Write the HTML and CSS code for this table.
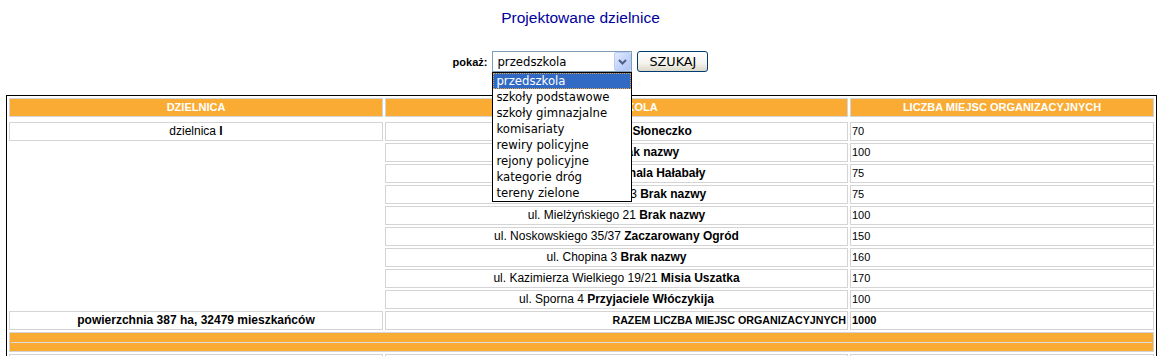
FILE: index.html
```html
<!DOCTYPE html>
<html lang="pl">
<head>
<meta charset="utf-8">
<title>Projektowane dzielnice</title>
<link rel="stylesheet" href="styles.css">
</head>
<body>
<h1 class="title">Projektowane dzielnice</h1>
<form class="filter">
  <label class="filter-label">pokaż:</label>
  <div class="select">
    <span class="select-value">przedszkola</span>
    <span class="select-arrow"><svg width="9" height="6" viewBox="0 0 9 6"><path d="M1 1 L4.5 4.5 L8 1" fill="none" stroke="#4d6185" stroke-width="2"/></svg></span>
    <ul class="select-list">
      <li class="is-active">przedszkola</li>
      <li>szkoły podstawowe</li>
      <li>szkoły gimnazjalne</li>
      <li>komisariaty</li>
      <li>rewiry policyjne</li>
      <li>rejony policyjne</li>
      <li>kategorie dróg</li>
      <li>tereny zielone</li>
    </ul>
  </div>
  <button class="btn" type="button">SZUKAJ</button>
</form>
<table class="grid">
  <thead>
    <tr>
      <th class="c1">DZIELNICA</th>
      <th class="c2">PRZEDSZKOLA</th>
      <th class="c3">LICZBA MIEJSC ORGANIZACYJNYCH</th>
    </tr>
    <tr class="spacer"><td colspan="3"></td></tr>
  </thead>
  <tbody>
    <tr><td class="txt mid">dzielnica <b>I</b></td><td class="txt mid">ul. Ogrodowa 12 <b>Słoneczko</b></td><td>70</td></tr>
    <tr><td></td><td class="txt mid">ul. Żabia 5 <b>Brak nazwy</b></td><td>100</td></tr>
    <tr><td></td><td class="txt mid">ul. Garbary 100 <b>Kanala Hałabały</b></td><td>75</td></tr>
    <tr><td></td><td class="txt mid">ul. Słowackiego 9/23 <b>Brak nazwy</b></td><td>75</td></tr>
    <tr><td></td><td class="txt mid">ul. Mielżyńskiego 21 <b>Brak nazwy</b></td><td>100</td></tr>
    <tr><td></td><td class="txt mid">ul. Noskowskiego 35/37 <b>Zaczarowany Ogród</b></td><td>150</td></tr>
    <tr><td></td><td class="txt mid">ul. Chopina 3 <b>Brak nazwy</b></td><td>160</td></tr>
    <tr><td></td><td class="txt mid">ul. Kazimierza Wielkiego 19/21 <b>Misia Uszatka</b></td><td>170</td></tr>
    <tr><td></td><td class="txt mid">ul. Sporna 4 <b>Przyjaciele Włóczykija</b></td><td>100</td></tr>
    <tr class="sum"><td class="txt mid">powierzchnia 387 ha, 32479 mieszkańców</td><td class="total right">RAZEM LICZBA MIEJSC ORGANIZACYJNYCH</td><td>1000</td></tr>
    <tr><td class="band" colspan="3"><hr class="band-rule"></td></tr>
    <tr><td class="txt mid">dzielnica <b>II</b></td><td class="txt mid">ul. Dmowskiego 7 <b>Brak nazwy</b></td><td>125</td></tr>
  </tbody>
</table>
</body>
</html>
```
FILE: styles.css
```css
body {
  margin: 0;
  background: #fff;
  color: #000;
  font-family: "Liberation Sans", Arial, sans-serif;
  font-size: 11px;
}

.title {
  margin: 8px 0 0;
  font-size: 15.5px;
  font-weight: normal;
  line-height: 20px;
  text-align: center;
  color: #00009c;
}

.filter {
  display: flex;
  justify-content: center;
  align-items: center;
  gap: 5px;
  height: 21px;
  margin: 23px 0 0;
}

.filter-label {
  font-weight: bold;
  font-size: 11px;
}

.select {
  position: relative;
  display: flex;
  align-items: center;
  box-sizing: border-box;
  width: 140px;
  height: 21px;
  border: 1px solid #7f9db9;
  background: #fff;
  font-family: "DejaVu Sans", sans-serif;
  font-size: 11.7px;
}

.select-value {
  flex: 1;
  padding-left: 4px;
}

.select-arrow {
  display: flex;
  align-items: center;
  justify-content: center;
  box-sizing: border-box;
  width: 17px;
  height: 19px;
  border: 1px solid #bacdf6;
  border-radius: 2px;
  background: linear-gradient(135deg, #e2ebfe 0%, #c5d5fb 50%, #b2c6f4 100%);
}

.select-list {
  position: absolute;
  left: -1px;
  top: 20px;
  z-index: 2;
  box-sizing: border-box;
  width: 140px;
  margin: 0;
  padding: 0;
  list-style: none;
  border: 1px solid #000;
  background: #fff;
}

.select-list li {
  height: 16px;
  line-height: 16px;
  padding-left: 3px;
  white-space: nowrap;
}

.select-list .is-active {
  background: #316ac5;
  color: #fff;
  outline: 1px dotted #e8a33a;
  outline-offset: -1px;
}

.btn {
  box-sizing: border-box;
  width: 71px;
  height: 21px;
  padding: 0;
  border: 1px solid #003c74;
  border-radius: 3px;
  background: linear-gradient(#ffffff 0%, #f4f3ee 60%, #dcd8c8 100%);
  color: #000;
  font-family: "DejaVu Sans", sans-serif;
  font-size: 12.8px;
}

.grid {
  width: 1151px;
  margin: 23px 0 0 6px;
  table-layout: fixed;
  border-collapse: separate;
  border-spacing: 2px;
  border: 1px solid #000;
  empty-cells: hide;
}

.grid th,
.grid td {
  box-sizing: border-box;
  height: 19px;
  padding: 0 1px;
  border: 1px solid #d4d4d4;
  line-height: 15px;
  text-align: left;
  vertical-align: middle;
  white-space: nowrap;
  overflow: hidden;
}

.grid th {
  background: #f9ab33;
  color: #fff;
  font-weight: bold;
  text-align: center;
}

.grid .c1 { width: 374px; }
.grid .c2 { width: 463px; }
.grid .c3 { width: 304px; }

.grid .spacer td {
  height: 1px;
  padding: 0;
  border: 0;
  line-height: 0;
  empty-cells: show;
}

.grid .txt { font-size: 12px; }
.grid .mid { text-align: center; }
.grid .right { text-align: right; }

.grid .sum td { font-weight: bold; }
.grid .sum .total { font-size: 10.7px; }

.grid .band {
  height: 20px;
  padding: 0 1px;
  background: #f9ab33;
}

.band-rule {
  margin: 0;
  height: 0;
  border: 0;
  border-top: 1px solid #dcdcdc;
}
```
